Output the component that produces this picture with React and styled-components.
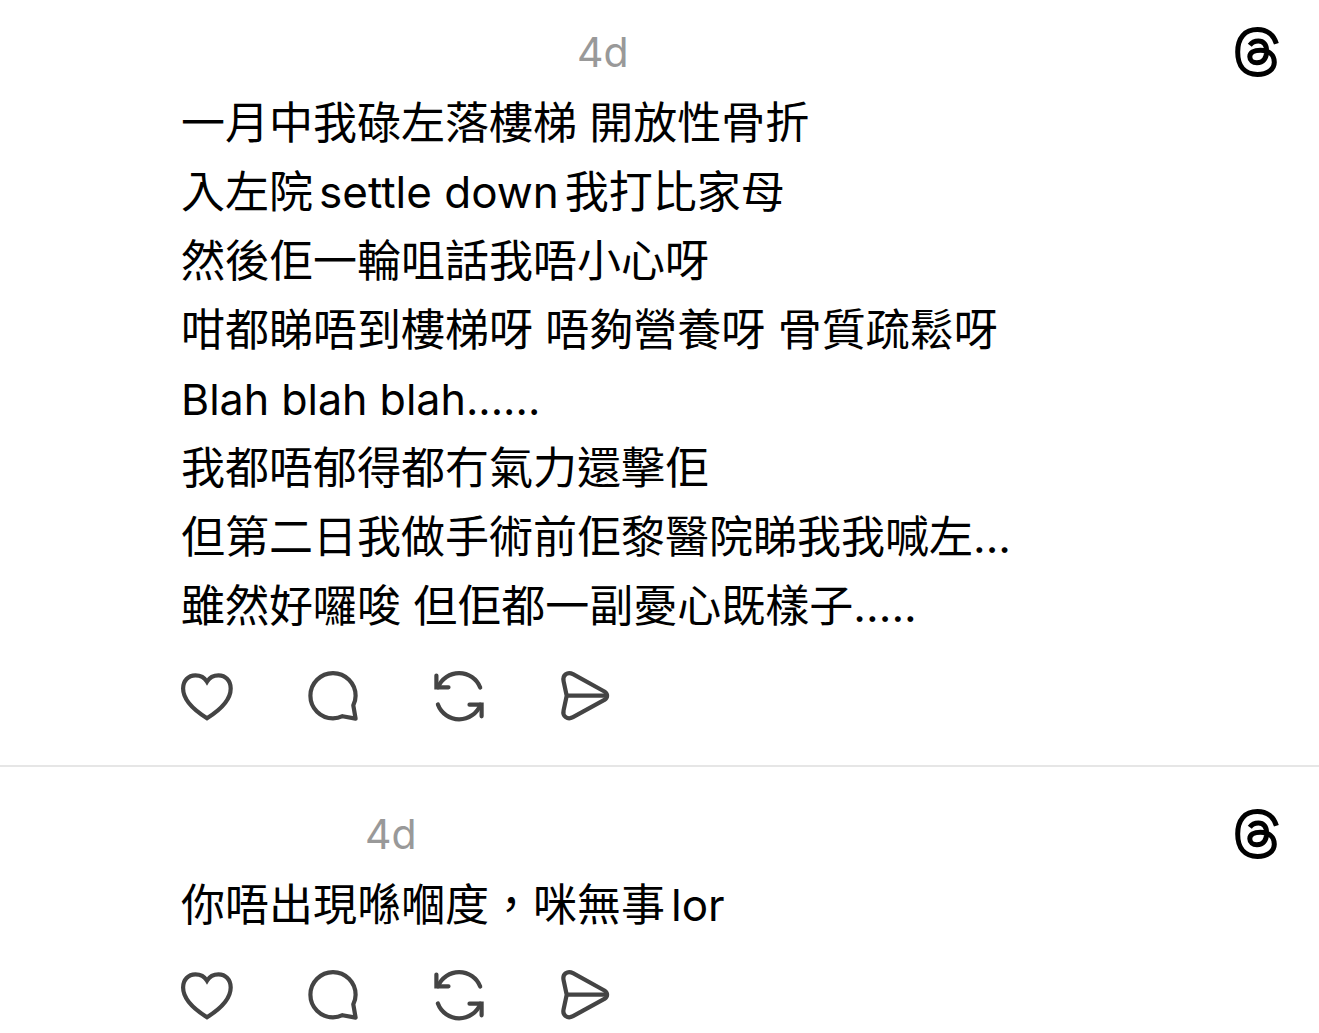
import React from "react";
import styled, { createGlobalStyle } from "styled-components";

const GlobalStyle = createGlobalStyle`
  * { box-sizing: border-box; }
  body {
    margin: 0;
    background: #fff;
    color: #000;
    font-family: Inter, "Noto Sans CJK TC", sans-serif;
  }
`;

const Feed = styled.main`
  display: flex;
  flex-direction: column;
`;

const Post = styled.article`
  display: flex;
  flex-direction: column;
  padding: ${(p) => (p.$first ? 27 : 42)}px 40px ${(p) => (p.$last ? 12 : 44)}px 181px;
  border-bottom: ${(p) => (p.$last ? "none" : "2px solid #e6e6e6")};
`;

const Header = styled.header`
  display: flex;
  align-items: center;
  height: 50px;
`;

const Author = styled.span`
  flex: none;
  width: ${(p) => p.$width}px;
`;

const Time = styled.time`
  color: #999;
  font-size: 41px;
  line-height: 50px;
`;

const BrandLink = styled.a`
  display: flex;
  margin-left: auto;
  color: #000;
`;

const Body = styled.div`
  margin-top: 12px;
  font-size: 44px;
  line-height: 69px;
`;

const Line = styled.p`
  margin: 0;
  font-size: ${(p) => (p.$latin ? "43px" : "inherit")};
`;

const Latin = styled.span`
  margin: 0 6px;
`;

const Actions = styled.div`
  display: flex;
  gap: 74px;
  margin-top: 30px;
`;

const ActionButton = styled.button`
  display: flex;
  padding: 0;
  border: 0;
  background: none;
  color: #444;
  cursor: pointer;
`;

const Glyph = styled.svg`
  display: block;
  overflow: visible;
  fill: none;
  stroke: currentColor;
`;

const ThreadsLogo = () => (
  <Glyph width="44" height="50" viewBox="0 0 44 50" strokeWidth="5" aria-hidden="true">
    <path d="M41.4 16.8C38.8 7.8 32 2.6 22.5 2.6C9.5 2.6 2.7 11 2.7 25C2.7 39 9.5 47.4 22.5 47.4C32.5 47.4 39.3 42.3 39.3 35.2C39.3 27.5 33.5 23.2 25.5 23.2C18.8 23.2 14.8 25.6 14.8 29.8C14.8 33.4 17.8 35.8 21.9 35.8C28.2 35.8 31.6 31.5 31.6 24C31.6 17.5 28.6 14 23.4 14C19.6 14 17 15.2 14.8 18.2" />
  </Glyph>
);

const icons = {
  Like: (
    <path d="M26 11.7C23.5 7.6 19 5.4 14.4 5.4C7.3 5.4 2.1 10.6 2.1 18.5C2.1 30 12 39.5 26 48.2C40 39.5 49.7 30 49.7 18.5C49.7 10.6 44.6 5.4 37.5 5.4C33 5.4 28.5 7.6 26 11.7Z" />
  ),
  Reply: (
    <path
      strokeLinejoin="round"
      d="M46.3 35.3L48.6 48.6L35.5 46.2C32.5 47.6 29.3 48.3 26 48.3A22.6 22.6 0 1 1 48.6 25.7C48.6 29 47.8 32.4 46.3 35.3Z"
    />
  ),
  Repost: (
    <g strokeLinecap="round">
      <path d="M3.4 5.5V17.3H15.5" />
      <path d="M5 17.3A22.7 22.7 0 0 1 47.2 17.5" />
      <path d="M36.5 34.7H48.6V46.3" />
      <path d="M4.9 34.5A22.7 22.7 0 0 0 47.4 34.7" />
    </g>
  ),
  Share: (
    <g strokeLinejoin="round">
      <path d="M7.7 25.7L4.6 11.2C3.2 5 8.5 1.2 14 4.2L45.4 21.5C49 23.8 49 27.6 45.4 29.9L14 47.2C8.5 50.2 3.2 46.4 4.6 40.2Z" />
      <path d="M7.7 25.7H47.5" />
    </g>
  ),
};

const posts = [
  {
    id: "stairs",
    authorWidth: 396,
    lines: [
      { text: "一月中我碌左落樓梯 開放性骨折" },
      { text: <>入左院<Latin>settle down</Latin>我打比家母</> },
      { text: "然後佢一輪咀話我唔小心呀" },
      { text: "咁都睇唔到樓梯呀 唔夠營養呀 骨質疏鬆呀" },
      { text: "Blah blah blah......", latin: true },
      { text: "我都唔郁得都冇氣力還擊佢" },
      { text: "但第二日我做手術前佢黎醫院睇我我喊左..." },
      { text: "雖然好囉唆 但佢都一副憂心既樣子....." },
    ],
  },
  {
    id: "reply",
    authorWidth: 184,
    lines: [{ text: <>你唔出現喺嗰度，咪無事<Latin>lor</Latin></> }],
  },
];

export default function App() {
  return (
    <>
      <GlobalStyle />
      <Feed lang="zh-HK">
        {posts.map((post, i) => (
          <Post key={post.id} $first={i === 0} $last={i === posts.length - 1}>
            <Header>
              <Author $width={post.authorWidth} />
              <Time>4d</Time>
              <BrandLink href="#" aria-label="Threads">
                <ThreadsLogo />
              </BrandLink>
            </Header>
            <Body>
              {post.lines.map((line, n) => (
                <Line key={n} $latin={line.latin}>
                  {line.text}
                </Line>
              ))}
            </Body>
            <Actions>
              {Object.entries(icons).map(([name, shape]) => (
                <ActionButton key={name} type="button" aria-label={name}>
                  <Glyph width="52" height="50" viewBox="0 1 52 50" strokeWidth="4.2" aria-hidden="true">
                    {shape}
                  </Glyph>
                </ActionButton>
              ))}
            </Actions>
          </Post>
        ))}
      </Feed>
    </>
  );
}
